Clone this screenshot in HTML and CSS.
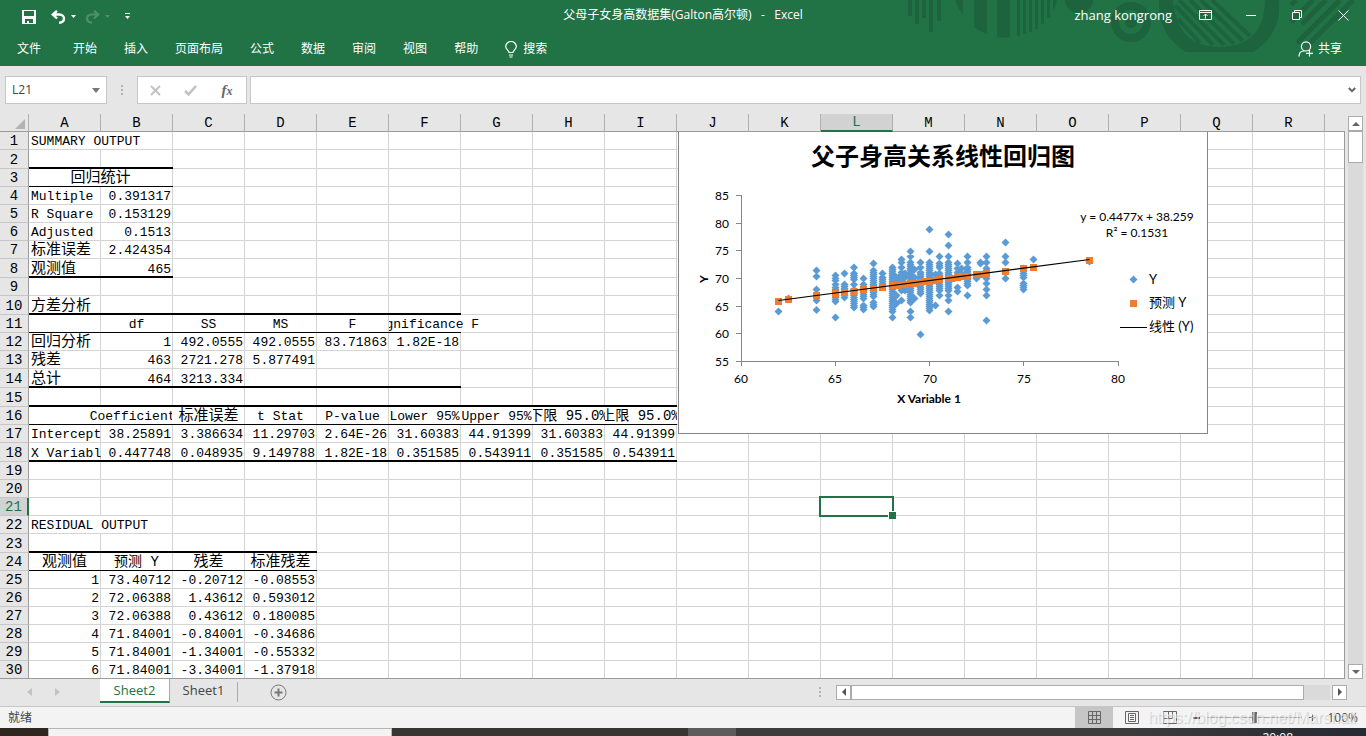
FILE: index.html
```html
<!DOCTYPE html>
<html lang="zh-CN">
<head>
<meta charset="utf-8">
<title>父母子女身高数据集(Galton高尔顿) - Excel</title>
<link rel="stylesheet" href="styles.css">
</head>
<body>
<header class="ribbon">
  <svg class="ribbon-art" width="466" height="66" viewBox="900 0 466 66" aria-hidden="true">
    <g fill="#1d633d">
      <path d="M908 0h4v16h-4zM915 0h4v24h-4zM922 0h4v18h-4zM929 0h4v32h-4zM937 0h4v21h-4z"/>
      <path d="M955 0h8v15q-5-7-8-15zM974 0h13v34q-8-3-13-7zM997 0h13v37q-7 1-13 0zM1017 0h3v36h-3zM1023 0h3v34h-3zM1029 0h3v32h-3zM1035 0h3v29h-3zM1041 0h3v24h-3zM1047 0h3v18h-3zM1053 0h4q-1 6-4 11z"/>
      <path d="M1065 0h28a14 13 0 0 1-28 0z"/>
      <circle cx="1131" cy="22" r="6"/>
      <path d="M1159 0h14q4 47 46 47q45 0 46-47h14q3 34-26 52h-67q-29-18-27-52z"/>
    </g>
    <g fill="none" stroke="#1d633d">
      <circle cx="1131" cy="22" r="16" stroke-width="8"/>
      <path stroke-width="4" d="M1175 5l38 40M1179 0l45 45M1190 0l44 44M1201 0l42 41M1212 0l38 36M1178 19l22 24"/>
      <path stroke-width="5" d="M1291 5l5-5M1291 22l22-22M1302 24l24-24M1297 43l43-43M1308 45l45-45"/>
    </g>
  </svg>
  <div class="titlebar">
    <div class="quick">
      <button class="icon-btn" aria-label="保存"><svg width="14" height="14" viewBox="0 0 14 14"><path fill="#fff" fill-rule="evenodd" d="M0 0h14v14H0zM2 1v5h10V1zM3 9v4h2v-2h2v2h4V9z"/></svg></button>
      <button class="icon-btn undo" aria-label="撤消"><svg width="15" height="14" viewBox="0 0 15 14"><path fill="none" stroke="#fff" stroke-width="2.4" d="M6 0.800L1.800 4.500L6 8.500M2 4.500h6.500c3 0 4.500 2 4.500 4s-1.500 4-5 4.200"/></svg></button>
      <svg class="caret" width="5" height="3" viewBox="0 0 5 3"><path fill="#fff" d="M0 0h5L2.500 3z"/></svg>
      <button class="icon-btn redo" aria-label="恢复"><svg width="15" height="14" viewBox="0 0 15 14"><path fill="none" stroke="#4f8f6b" stroke-width="2.200" d="M9 0.800l4.200 3.700L9 8.500M13 4.500H6.500c-3 0-4.500 2-4.500 4s1.500 4 5 4.200"/></svg></button>
      <svg class="caret" width="5" height="3" viewBox="0 0 5 3"><path fill="#4f8f6b" d="M0 0h5L2.500 3z"/></svg>
      <button class="icon-btn more" aria-label="自定义快速访问工具栏"><svg width="5" height="7" viewBox="0 0 5 7"><path fill="#fff" d="M0 0h5v1H0zM0 3h5L2.500 6z"/></svg></button>
    </div>
    <h1 class="doc-title">父母子女身高数据集(Galton高尔顿) &nbsp;&nbsp;-&nbsp;&nbsp; Excel</h1>
    <div class="window">
      <span class="user">zhang kongrong</span>
      <button class="win-btn" aria-label="功能区显示选项"><svg width="13" height="10" viewBox="0 0 13 10"><path fill="none" stroke="#fff" d="M.5.5h12v9H.5zM.5 2.500h12M6.500 8.500V4.500M4.500 6l2-2 2 2"/></svg></button>
      <button class="win-btn" aria-label="最小化"><svg width="10" height="10" viewBox="0 0 10 10"><path fill="#fff" d="M0 5h10v1H0z"/></svg></button>
      <button class="win-btn" aria-label="还原"><svg width="10" height="10" viewBox="0 0 10 10"><path fill="none" stroke="#fff" d="M.5 2.500h7v7h-7zM2.500 2.500v-2h7v7h-2"/></svg></button>
      <button class="win-btn" aria-label="关闭"><svg width="11" height="11" viewBox="0 0 11 11"><path stroke="#fff" d="M.5.5l10 10M10.500.5l-10 10"/></svg></button>
    </div>
  </div>
  <nav class="tabs">
    <a class="file" href="#">文件</a><a href="#">开始</a><a href="#">插入</a><a href="#">页面布局</a><a href="#">公式</a><a href="#">数据</a><a href="#">审阅</a><a href="#">视图</a><a href="#">帮助</a>
    <a class="search" href="#"><svg width="12" height="17" viewBox="0 0 12 17"><path fill="none" stroke="#fff" stroke-width="1.200" d="M4 11.500c0-2-3.300-3-3.300-6a5.300 5 0 0 1 10.600 0c0 3-3.300 4-3.300 6zM4 14h4M4.500 16h3"/></svg>搜索</a>
    <a class="share" href="#"><svg width="16" height="16" viewBox="0 0 16 16"><path fill="none" stroke="#fff" stroke-width="1.200" d="M1 15.500c0-3.500 2-5.500 5-5.500M8 .8a4.600 4.600 0 1 1 0 9.200a4.600 4.600 0 0 1 0-9.200M11.500 9v6.500M8 12.300h7"/></svg>共享</a>
  </nav>
</header>

<section class="formula-bar">
  <div class="name-box">
    <input class="name-input" aria-label="名称框" value="L21">
    <svg width="8" height="5" viewBox="0 0 8 5"><path fill="#777" d="M0 0h8L4 5z"/></svg>
  </div>
  <span class="grip"><i></i><i></i><i></i></span>
  <div class="fx-box">
    <button class="icon-btn" aria-label="取消"><svg width="11" height="11" viewBox="0 0 11 11"><path stroke="#c2c2c2" stroke-width="2" d="M1 1l9 9M10 1l-9 9"/></svg></button>
    <button class="icon-btn" aria-label="输入"><svg width="13" height="11" viewBox="0 0 13 11"><path fill="none" stroke="#c2c2c2" stroke-width="2.600" d="M1 6l3.500 3.300L12 1"/></svg></button>
    <button class="fx" aria-label="插入函数">f<small>x</small></button>
  </div>
  <div class="formula">
    <input aria-label="编辑栏" value="">
    <svg width="8" height="6" viewBox="0 0 8 6"><path fill="none" stroke="#666" stroke-width="2" d="M.8 1L4 4.200 7.200 1"/></svg>
  </div>
</section>

<main class="workspace">
  <div class="sheet">
    <table class="grid">
      <colgroup><col class="c-head"><col span="18" class="c-data"><col></colgroup>
      <thead>
        <tr><th class="corner"><svg width="10" height="10" viewBox="0 0 10 10"><path fill="#b3b3b3" d="M10 0v10H0z"/></svg></th><th>A</th><th>B</th><th>C</th><th>D</th><th>E</th><th>F</th><th>G</th><th>H</th><th>I</th><th>J</th><th>K</th><th class="active">L</th><th>M</th><th>N</th><th>O</th><th>P</th><th>Q</th><th>R</th><th class="edge"></th></tr>
      </thead>
      <tbody>
        <tr><th>1</th><td colspan="2">SUMMARY OUTPUT</td><td colspan="17" class="blank"></td></tr>
        <tr class="tall"><th>2</th><td class="thick"></td><td class="thick"></td><td colspan="17" class="blank"></td></tr>
        <tr><th>3</th><td colspan="2" class="thin c cn">回归统计</td><td colspan="17" class="blank"></td></tr>
        <tr><th>4</th><td>Multiple R</td><td class="n">0.391317</td><td colspan="17" class="blank"></td></tr>
        <tr><th>5</th><td>R Square</td><td class="n">0.153129</td><td colspan="17" class="blank"></td></tr>
        <tr><th>6</th><td>Adjusted R</td><td class="n">0.1513</td><td colspan="17" class="blank"></td></tr>
        <tr><th>7</th><td class="cn">标准误差</td><td class="n">2.424354</td><td colspan="17" class="blank"></td></tr>
        <tr class="tall"><th>8</th><td class="thick cn">观测值</td><td class="thick n">465</td><td colspan="17" class="blank"></td></tr>
        <tr><th>9</th><td colspan="19" class="blank"></td></tr>
        <tr class="tall"><th>10</th><td class="thick cn">方差分析</td><td class="thick"></td><td class="thick"></td><td class="thick"></td><td class="thick"></td><td class="thick"></td><td colspan="13" class="blank"></td></tr>
        <tr><th>11</th><td class="thin"></td><td class="thin c">df</td><td class="thin c">SS</td><td class="thin c">MS</td><td class="thin c">F</td><td class="thin c spill-right"><span>Significance F</span></td><td colspan="13" class="blank"></td></tr>
        <tr><th>12</th><td class="cn">回归分析</td><td class="n">1</td><td class="n">492.0555</td><td class="n">492.0555</td><td class="n">83.71863</td><td class="n">1.82E-18</td><td colspan="13" class="blank"></td></tr>
        <tr><th>13</th><td class="cn">残差</td><td class="n">463</td><td class="n">2721.278</td><td class="n">5.877491</td><td colspan="15" class="blank"></td></tr>
        <tr class="tall"><th>14</th><td class="thick cn">总计</td><td class="thick n">464</td><td class="thick n">3213.334</td><td class="thick"></td><td class="thick"></td><td class="thick"></td><td colspan="13" class="blank"></td></tr>
        <tr class="tall"><th>15</th><td class="thick"></td><td class="thick"></td><td class="thick"></td><td class="thick"></td><td class="thick"></td><td class="thick"></td><td class="thick"></td><td class="thick"></td><td class="thick"></td><td colspan="10" class="blank"></td></tr>
        <tr><th>16</th><td class="thin open"></td><td class="thin c spill-left"><span>Coefficients</span></td><td class="thin c cn">标准误差</td><td class="thin c">t Stat</td><td class="thin c">P-value</td><td class="thin c open">Lower 95%</td><td class="thin c open">Upper 95%</td><td class="thin c mix open"><span>下限 95.0%</span></td><td class="thin c mix open"><span>上限 95.0%</span></td><td colspan="10" class="blank"></td></tr>
        <tr><th>17</th><td>Intercept</td><td class="n">38.25891</td><td class="n">3.386634</td><td class="n">11.29703</td><td class="n">2.64E-26</td><td class="n">31.60383</td><td class="n">44.91399</td><td class="n">31.60383</td><td class="n">44.91399</td><td colspan="10" class="blank"></td></tr>
        <tr class="tall"><th>18</th><td class="thick">X Variable 1</td><td class="thick n">0.447748</td><td class="thick n">0.048935</td><td class="thick n">9.149788</td><td class="thick n">1.82E-18</td><td class="thick n">0.351585</td><td class="thick n">0.543911</td><td class="thick n">0.351585</td><td class="thick n">0.543911</td><td colspan="10" class="blank"></td></tr>
        <tr><th>19</th><td colspan="19" class="blank"></td></tr>
        <tr><th>20</th><td colspan="19" class="blank"></td></tr>
        <tr><th class="active">21</th><td colspan="11" class="blank inner"></td><td class="selected"></td><td colspan="7" class="blank"></td></tr>
        <tr><th>22</th><td colspan="2">RESIDUAL OUTPUT</td><td colspan="17" class="blank"></td></tr>
        <tr class="tall"><th>23</th><td class="thick"></td><td class="thick"></td><td class="thick"></td><td class="thick"></td><td colspan="15" class="blank"></td></tr>
        <tr><th>24</th><td class="thin c cn">观测值</td><td class="thin c mix">预测 Y</td><td class="thin c cn">残差</td><td class="thin c cn">标准残差</td><td colspan="15" class="blank"></td></tr>
        <tr><th>25</th><td class="n">1</td><td class="n">73.40712</td><td class="n">-0.20712</td><td class="n">-0.08553</td><td colspan="15" class="blank"></td></tr>
        <tr><th>26</th><td class="n">2</td><td class="n">72.06388</td><td class="n">1.43612</td><td class="n">0.593012</td><td colspan="15" class="blank"></td></tr>
        <tr><th>27</th><td class="n">3</td><td class="n">72.06388</td><td class="n">0.43612</td><td class="n">0.180085</td><td colspan="15" class="blank"></td></tr>
        <tr><th>28</th><td class="n">4</td><td class="n">71.84001</td><td class="n">-0.84001</td><td class="n">-0.34686</td><td colspan="15" class="blank"></td></tr>
        <tr><th>29</th><td class="n">5</td><td class="n">71.84001</td><td class="n">-1.34001</td><td class="n">-0.55332</td><td colspan="15" class="blank"></td></tr>
        <tr><th>30</th><td class="n">6</td><td class="n">71.84001</td><td class="n">-3.34001</td><td class="n">-1.37918</td><td colspan="15" class="blank"></td></tr>
      </tbody>
    </table>
    <figure class="chart">
      <svg width="530" height="302" viewBox="678 132 530 302" role="img" aria-label="父子身高关系线性回归图">
        <text class="chart-title" x="943" y="165">父子身高关系线性回归图</text>
        <path class="axis" d="M741.500 195v167M736 361.500h382.500M736 195.500h5M736 223.500h5M736 250.500h5M736 278.500h5M736 306.500h5M736 333.500h5M741.500 361v5M835.500 361v5M929.500 361v5M1023.500 361v5M1118.500 361v5"/>
        <g class="ylab"><text x="729" y="200">85</text><text x="729" y="228">80</text><text x="729" y="255">75</text><text x="729" y="283">70</text><text x="729" y="311">65</text><text x="729" y="338">60</text><text x="729" y="366">55</text></g>
        <g class="xlab"><text x="741" y="383">60</text><text x="835" y="383">65</text><text x="930" y="383">70</text><text x="1024" y="383">75</text><text x="1118" y="383">80</text>
          <text class="strong" x="929" y="403">X Variable 1</text>
          <text class="strong" transform="translate(708 279) rotate(-90)">Y</text>
          <text x="1137" y="221">y = 0.4477x + 38.259</text><text x="1137" y="237">R² = 0.1531</text></g>
        <path id="observed" fill="#5b9bd5"/>
        <path id="predicted" fill="#ed7d31"/>
        <path stroke="#000" stroke-width="1.200" d="M778.500 300.500L1089.500 259.500"/>
        <path fill="#5b9bd5" d="M1129.500 279.500l4-4 4 4-4 4z"/>
        <path fill="#ed7d31" d="M1130 300h7v7h-7z"/>
        <path stroke="#000" d="M1120 327.500h27"/>
        <g class="legend"><text x="1149" y="284">Y</text><text x="1149" y="307">预测 Y</text><text x="1149" y="331">线性 (Y)</text></g>
      </svg>
    </figure>
  </div>
  <div class="vscroll">
    <button class="sbtn" aria-label="向上滚动"><svg width="8" height="4" viewBox="0 0 8 4"><path fill="#666" d="M0 4h8L4 0z"/></svg></button>
    <div class="vthumb"></div>
    <div class="vtrack"></div>
    <button class="sbtn" aria-label="向下滚动"><svg width="8" height="4" viewBox="0 0 8 4"><path fill="#666" d="M0 0h8L4 4z"/></svg></button>
  </div>
</main>

<div class="sheetbar">
  <div class="sheet-nav">
    <button class="icon-btn" aria-label="上一张"><svg width="5" height="8" viewBox="0 0 5 8"><path fill="#c2c2c2" d="M5 0v8L0 4z"/></svg></button>
    <button class="icon-btn" aria-label="下一张"><svg width="5" height="8" viewBox="0 0 5 8"><path fill="#c2c2c2" d="M0 0v8l5-4z"/></svg></button>
  </div>
  <button class="sheet-tab current">Sheet2</button>
  <button class="sheet-tab">Sheet1</button>
  <span class="tab-rule"></span>
  <button class="icon-btn add" aria-label="新工作表"><svg width="17" height="17" viewBox="0 0 17 17"><circle cx="8.500" cy="8.500" r="7.500" fill="none" stroke="#777"/><path fill="#777" d="M7.500 4.500h2v3h3v2h-3v3h-2v-3h-3v-2h3z"/></svg></button>
  <div class="hscroll">
    <span class="grip"><i></i><i></i><i></i></span>
    <button class="sbtn left" aria-label="向左滚动"><svg width="4" height="8" viewBox="0 0 4 8"><path fill="#555" d="M4 0v8L0 4z"/></svg></button>
    <div class="hthumb"></div>
    <div class="htrack"></div>
    <button class="sbtn" aria-label="向右滚动"><svg width="4" height="8" viewBox="0 0 4 8"><path fill="#555" d="M0 0v8l4-4z"/></svg></button>
  </div>
</div>

<footer class="statusbar">
  <span class="ready">就绪</span>
  <div class="views">
    <button class="view on" aria-label="普通"><svg width="13" height="13" viewBox="0 0 13 13"><path fill="none" stroke="#666" d="M.5.5h12v12H.5zM4.500 0v13M8.500 0v13M0 4.500h13M0 8.500h13"/></svg></button>
    <button class="view" aria-label="页面布局"><svg width="14" height="13" viewBox="0 0 14 13"><path fill="none" stroke="#666" d="M.5.5h13v12H.5zM3.500 2.500h7v8h-7zM5 4.500h4M5 6.500h4M5 8.500h4"/></svg></button>
    <button class="view" aria-label="分页预览"><svg width="14" height="13" viewBox="0 0 14 13"><path fill="none" stroke="#666" d="M.5.5h13v12H.5zM.5 7.500h9v-7M5.500 0v7.500"/></svg></button>
  </div>
  <div class="zoom">
    <button class="zbtn" aria-label="缩小"><svg width="7" height="7" viewBox="0 0 7 7"><path fill="#555" d="M0 3h7v2H0z"/></svg></button>
    <input type="range" min="0" max="100" value="50" aria-label="缩放">
    <button class="zbtn" aria-label="放大"><svg width="7" height="7" viewBox="0 0 7 7"><path fill="#555" d="M0 3h3V0h1v3h3v1H4v3H3V4H0z"/></svg></button>
    <button class="percent">100%</button>
  </div>
  <span class="watermark">https://blog.csdn.net/Marshall</span>
</footer>
<div class="taskbar"><span class="task-start"></span><span class="task-search"></span><span class="task-gap"></span><span class="task-active"></span><span class="task-rest"></span><span class="clock">20:08</span></div>
<script src="chart.js"></script>
</body>
</html>
```
FILE: styles.css
```css
* { box-sizing: border-box; }
body {
  margin: 0; height: 100vh; overflow: hidden;
  display: flex; flex-direction: column;
  background: #e6e6e6; color: #000;
  font: 12px/16px "Open Sans", "Noto Sans CJK SC", sans-serif;
}
button, input { font: inherit; color: inherit; border: 0; padding: 0; margin: 0; background: none; }
a { color: inherit; text-decoration: none; }
svg { display: block; flex: none; }
.icon-btn { display: flex; align-items: center; justify-content: center; }

/* Ribbon */
.ribbon { position: relative; flex: none; background: #217346; color: #fff; }
.ribbon-art { position: absolute; top: 0; right: 0; }
.titlebar { position: relative; display: grid; grid-template-columns: 1fr auto 1fr; align-items: center; height: 30px; }
.quick { display: flex; align-items: center; padding: 3px 0 0 22px; }
.quick .undo { margin-left: 15px; }
.quick .caret { margin-left: 5px; }
.quick .redo { margin-left: 9px; }
.quick .more { margin-left: 15px; }
.doc-title { margin: 0; font-size: 12px; font-weight: 400; white-space: nowrap; }
.window { display: flex; align-items: center; justify-content: flex-end; }
.user { font-size: 13px; margin-right: 10px; }
.win-btn { width: 46px; height: 30px; display: flex; align-items: center; justify-content: center; }
.tabs { position: relative; display: flex; align-items: center; height: 36px; padding: 2px 24px 0 17px; gap: 27px; }
.tabs .file { margin-right: 5px; }
.tabs .search, .tabs .share { display: flex; align-items: center; gap: 6px; }
.tabs .share { margin-left: auto; gap: 4px; }

/* Formula bar */
.formula-bar { flex: none; display: flex; padding: 10px 5px; height: 48px; }
.name-box, .fx-box, .formula { display: flex; align-items: center; background: #fff; border: 1px solid #c6c6c6; }
.name-box { width: 102px; padding: 0 6px; }
.name-input { flex: 1; min-width: 0; color: #444; }
.grip { width: 2px; display: flex; flex-direction: column; justify-content: center; gap: 2px; }
.grip i { width: 2px; height: 2px; background: #b3b3b3; }
.formula-bar .grip { margin: 0 14px; }
.fx-box { width: 110px; padding: 0 12px; justify-content: space-between; }
.fx { width: 14px; font: italic bold 15px/16px "Liberation Serif", serif; color: #666; white-space: nowrap; }
.fx small { font-size: 12px; }
.formula { flex: 1; margin-left: 3px; padding-right: 4px; }
.formula input { flex: 1; min-width: 0; }

/* Worksheet */
.workspace { flex: 1; min-height: 0; display: flex; }
.sheet { position: relative; flex: 1; min-width: 0; overflow: hidden; border-bottom: 1px solid #9b9b9b; }
.grid { width: 100%; table-layout: fixed; border-collapse: separate; border-spacing: 0; font: 13px/15px "Liberation Mono", "Noto Sans CJK SC", monospace; }
.c-head { width: 29px; }
.c-data { width: 72px; }
.grid th { height: 18px; padding: 2px 0 0; font-weight: 400; font-size: 14px; line-height: 15px; background: #e6e6e6; }
.grid thead th { border-right: 1px solid #b0b0b0; border-bottom: 1px solid #9b9b9b; }
.grid thead th.edge { border-right: 0; }
.grid thead .active { background: #d2d2d2; color: #217346; border-bottom: 2px solid #217346; padding-top: 1px; }
.corner svg { margin: 0 0 0 15px; }
.grid tbody th { border-right: 1px solid #9b9b9b; border-bottom: 1px solid #c6c6c6; }
.grid tbody .active { background: #d2d2d2; color: #217346; border-right: 2px solid #217346; }
.grid td {
  --line: #d4d4d4; --bottom: #d4d4d4; --weight: 1px;
  height: 18px; padding: 2px 1px 1px 2px; white-space: nowrap; overflow: hidden;
  background:
    linear-gradient(var(--bottom), var(--bottom)) bottom / 100% var(--weight) no-repeat,
    linear-gradient(var(--line), var(--line)) right / 1px 100% no-repeat,
    #fff;
}
.grid .tall td, .grid .tall th { height: 19px; }
.grid td.blank {
  border-right: 1px solid #9b9b9b;
  background:
    linear-gradient(#d4d4d4, #d4d4d4) bottom / 100% 1px no-repeat,
    repeating-linear-gradient(to right, #fff 0 71px, #d4d4d4 71px 72px);
}
.grid td.inner { border-right: 0; }
.grid td.thick { --bottom: #000; --weight: 2px; }
.grid td.thin { --bottom: #000; }
.grid td.n { text-align: right; padding-left: 0; padding-right: 2px; }
.grid td.c { text-align: center; padding-left: 0; }
.grid td.cn { font-size: 15px; }
.grid td.mix { font-size: 14px; }
.grid td.open { --line: #fff; }
.grid td.spill-right, .grid td.spill-left { position: relative; overflow: visible; --line: #fff; }
.spill-right span, .spill-left span { position: relative; display: flex; justify-content: center; }
.spill-right span { clip-path: inset(0 -72px 0 0); }
.spill-left span { clip-path: inset(0 0 0 -72px); }
.mix span { display: flex; justify-content: center; }
.grid td.selected { position: relative; overflow: visible; }
.selected::before { content: ""; position: absolute; inset: -2px -1px -1px -2px; border: 2px solid #217346; }
.selected::after { content: ""; position: absolute; right: -3px; bottom: -3px; width: 7px; height: 7px; background: #217346; border: 1px solid #fff; border-width: 1px 0 0 1px; }

/* Chart floating over the cells */
.chart { position: absolute; left: 678px; top: 18px; margin: 0; background: #fff; border: 1px solid #868686; border-top: 0; }
.chart svg { margin: 0 -1px -1px; }
.chart text { font-family: Lato, "Noto Sans CJK SC", sans-serif; font-size: 12px; }
.chart .chart-title { font-family: "Noto Sans CJK SC", sans-serif; font-size: 24px; font-weight: 700; text-anchor: middle; }
.chart .legend text { font-size: 13px; }
.axis { fill: none; stroke: #868686; }
.ylab { text-anchor: end; }
.xlab { text-anchor: middle; }
.chart .strong { font-weight: 700; }

/* Scroll bars */
.vscroll { flex: none; width: 21px; padding: 2px 4px 0 3px; display: flex; flex-direction: column; }
.sbtn { flex: none; width: 15px; height: 15px; display: flex; align-items: center; justify-content: center; background: #fff; border: 1px solid #ababab; }
.vthumb { height: 32px; background: #fff; border: 1px solid #ababab; }
.vtrack { flex: 1; background: #dadada; }
.vscroll .sbtn, .vthumb, .vtrack { width: 15px; }
.hscroll { margin-left: auto; display: flex; align-items: center; width: 528px; height: 26px; }
.hscroll .left { margin-left: 15px; }
.hthumb { flex: 1; height: 15px; background: #fff; border: 1px solid #ababab; }
.htrack { width: 26px; height: 15px; margin-right: 2px; background: #dadada; }

/* Sheet tabs */
.sheetbar { flex: none; display: flex; align-items: flex-start; height: 28px; padding-right: 19px; border-bottom: 1px solid #c6c6c6; font-size: 13px; }
.sheet-nav { width: 100px; height: 26px; display: flex; align-items: center; justify-content: flex-start; gap: 23px; padding-left: 27px; }
.sheet-tab { width: 67px; height: 24px; color: #444; padding-bottom: 2px; }
.sheet-tab.current { width: 70px; background: #fff; color: #217346; border: 1px solid #ababab; border-width: 0 1px 2px 0; border-bottom-color: #217346; padding-bottom: 0; }
.tab-rule { width: 1px; height: 20px; margin-top: 3px; background: #ababab; margin-right: 32px; }
.add { height: 26px; }

/* Status bar */
.statusbar { position: relative; flex: none; display: flex; align-items: center; height: 21px; padding-right: 8px; background: #f3f3f3; color: #444; }
.ready { margin-left: 8px; }
.views { display: flex; margin-left: auto; }
.view { width: 38px; height: 21px; display: flex; align-items: center; justify-content: center; }
.view.on { background: #c6c6c6; }
.zoom { display: flex; align-items: center; width: 169px; padding-left: 4px; gap: 7px; }
.zbtn { width: 7px; }
.zoom input { appearance: none; flex: 1; min-width: 0; height: 12px; background: linear-gradient(#ababab, #ababab) center / 100% 1px no-repeat; }
.zoom input::-webkit-slider-thumb { appearance: none; width: 5px; height: 11px; background: #666; }
.percent { margin-left: 4px; }
.watermark { position: absolute; right: 10px; top: 2px; font: 16px/18px "Liberation Sans", sans-serif; color: rgba(255, 255, 255, 0.6); text-shadow: 1px 1px 1px rgba(120, 120, 120, 0.35); pointer-events: none; }

/* Desktop task bar */
.taskbar { position: relative; flex: none; display: flex; height: 8px; overflow: hidden; background: #3a3a3a; }
.task-start { width: 48px; background: #2f2620; }
.task-search { width: 344px; background: #f3f3f3; border: 1px solid #b5b5b5; border-bottom: 0; }
.task-gap { flex: 1; background: #383632; }
.task-active { width: 48px; background: #5c5c5c; }
.task-rest { width: 630px; background: linear-gradient(to right, #3c3c3c 60%, #252a33); }
.clock { position: absolute; right: 73px; top: 2px; color: #fff; }
```
FILE: chart.js
```js
// Heights of the sons (plot y) grouped by father's height (plot x).
// A pair [from, to] stands for a run of closely spaced points.
const columns = [
  [778.5, 311], [788.5, 298],
  [816.5, 270, 276, 289, 300, 309.5],
  [835.5, 275, [278, 281], 284, [287, 301], 317],
  [844.5, 273, [284, 288], [289, 297]],
  [854, 267, [273, 279], 284, [289, 307]],
  [863.5, 278, 284, [288, 299], [305, 309]],
  [873.5, 263, [270, 297], [302, 306]],
  [882.5, 273, [277, 286]],
  [892.5, [267, 312], 317],
  [896.5, 277, 281, 295, 303],
  [901.5, 259, 262, 267, [272, 291], 300],
  [905, 273, 277, 290],
  [910.5, 251, 256, [262, 302], 311, 317],
  [914.5, 269, 277, 298],
  [920.5, 262, 267, [272, 282], [287, 293], 334],
  [929.5, 229, 251, [262, 310]],
  [935.5, 274, 305],
  [939.5, 256, [263, 268], [273, 278], [284, 290], 295],
  [948.5, 234, 245, 256, [262, 291], 295, 300, 311],
  [957.5, 263, 268, 272, 287, 291],
  [961.5, 268, 273],
  [967.5, 256, 262, [267, 285], 295],
  [976.5, 278], [980.5, 262, 263],
  [986.5, 256, 262, [268, 272], 278, 283, 289, 295, 320],
  [1005.5, 242, 256, 262, 272, 278],
  [1023.5, 268, [273, 277], [283, 290]],
  [1033.5, 259], [1089.5, 261]
];
// Fathers' heights that only show as a fitted value.
const fittedOnly = [898.5, 925, 952];

const fitted = (x) => {
  const y = Math.round(300.5 - (x - 778.5) * 0.1318);
  return `M${x - 3.5} ${y - 3}h7v7h-7z`;
};

let observed = "";
let predicted = fittedOnly.map(fitted).join("");
for (const [x, ...ys] of columns) {
  for (const item of ys) {
    const [from, to] = Array.isArray(item) ? item : [item, item];
    for (let y = from; y <= to; y += 2) {
      observed += `M${x - 4} ${y + 0.5}l4-4 4 4-4 4z`;
    }
  }
  predicted += fitted(x);
}
document.getElementById("observed").setAttribute("d", observed);
document.getElementById("predicted").setAttribute("d", predicted);
```
